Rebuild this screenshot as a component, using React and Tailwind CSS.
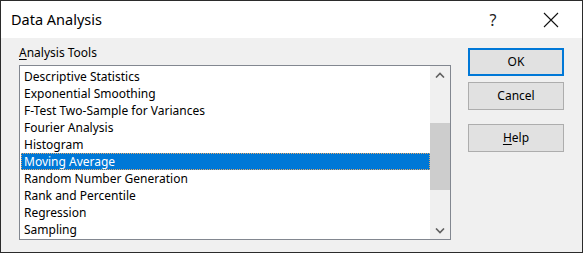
import React from 'react';

const tools = [
  'Descriptive Statistics',
  'Exponential Smoothing',
  'F-Test Two-Sample for Variances',
  'Fourier Analysis',
  'Histogram',
  'Moving Average',
  'Random Number Generation',
  'Rank and Percentile',
  'Regression',
  'Sampling',
];

function App() {
  const selected = 'Moving Average';

  return (
    <div className="w-[583px] h-[253px] border border-[#2b2b2b] bg-[#f0f0f0] flex flex-col text-black font-['Noto_Sans',sans-serif] overflow-hidden">
      {/* Title bar */}
      <div className="h-[37px] bg-white flex items-center shrink-0">
        <span className="pl-[10px] text-[14.5px] leading-none">Data Analysis</span>
        <span className="ml-auto text-[16px] leading-none w-[14px] text-center mr-[43px] text-[#222]">?</span>
        <svg width="16" height="16" viewBox="0 0 16 16" className="mr-[23px]">
          <path d="M1 1 L15 15 M15 1 L1 15" stroke="#111" strokeWidth="1.1" />
        </svg>
      </div>

      {/* Body */}
      <div className="flex flex-1 pl-[18px] pt-[7px]">
        <div className="flex flex-col">
          <div className="text-[12px] leading-[16px] h-[20px]">
            <span className="underline underline-offset-2">A</span>nalysis Tools
          </div>
          <div className="w-[432px] h-[175px] border border-[#828790] bg-white flex">
            <div className="flex-1 pt-[2px] pl-[1px]">
              {tools.map((t) => (
                <div
                  key={t}
                  className={
                    t === selected
                      ? 'h-[17px] pl-[2px] text-[12px] leading-[15px] bg-[#0078d7] text-white border border-dotted border-[#e8a868]'
                      : 'h-[17px] pl-[3px] text-[12px] leading-[17px] whitespace-nowrap'
                  }
                >
                  {t}
                </div>
              ))}
            </div>
            {/* Scrollbar */}
            <div className="w-[20px] bg-[#f0f0f0] flex flex-col">
              <div className="h-[17px] flex items-center justify-center">
                <svg width="10" height="6" viewBox="0 0 10 6">
                  <path d="M1 5.5 L5 1.5 L9 5.5" stroke="#606060" strokeWidth="1.6" fill="none" />
                </svg>
              </div>
              <div className="flex-1 flex flex-col">
                <div className="h-[40px]" />
                <div className="h-[67px] bg-[#cdcdcd]" />
              </div>
              <div className="h-[17px] flex items-center justify-center">
                <svg width="10" height="6" viewBox="0 0 10 6">
                  <path d="M1 0.5 L5 4.5 L9 0.5" stroke="#606060" strokeWidth="1.6" fill="none" />
                </svg>
              </div>
            </div>
          </div>
        </div>

        {/* Buttons */}
        <div className="flex flex-col ml-[17px] pt-[3px]">
          <button className="w-[96px] h-[28px] bg-[#e1e1e1] border-2 border-[#0078d7] text-[12px] leading-none">OK</button>
          <button className="w-[96px] h-[28px] mt-[6px] bg-[#e1e1e1] border border-[#adadad] text-[12px] leading-none">Cancel</button>
          <button className="w-[96px] h-[28px] mt-[14px] bg-[#e1e1e1] border border-[#adadad] text-[12px] leading-none">
            <span className="underline underline-offset-2">H</span>elp
          </button>
        </div>
      </div>
    </div>
  );
}

export default App;
